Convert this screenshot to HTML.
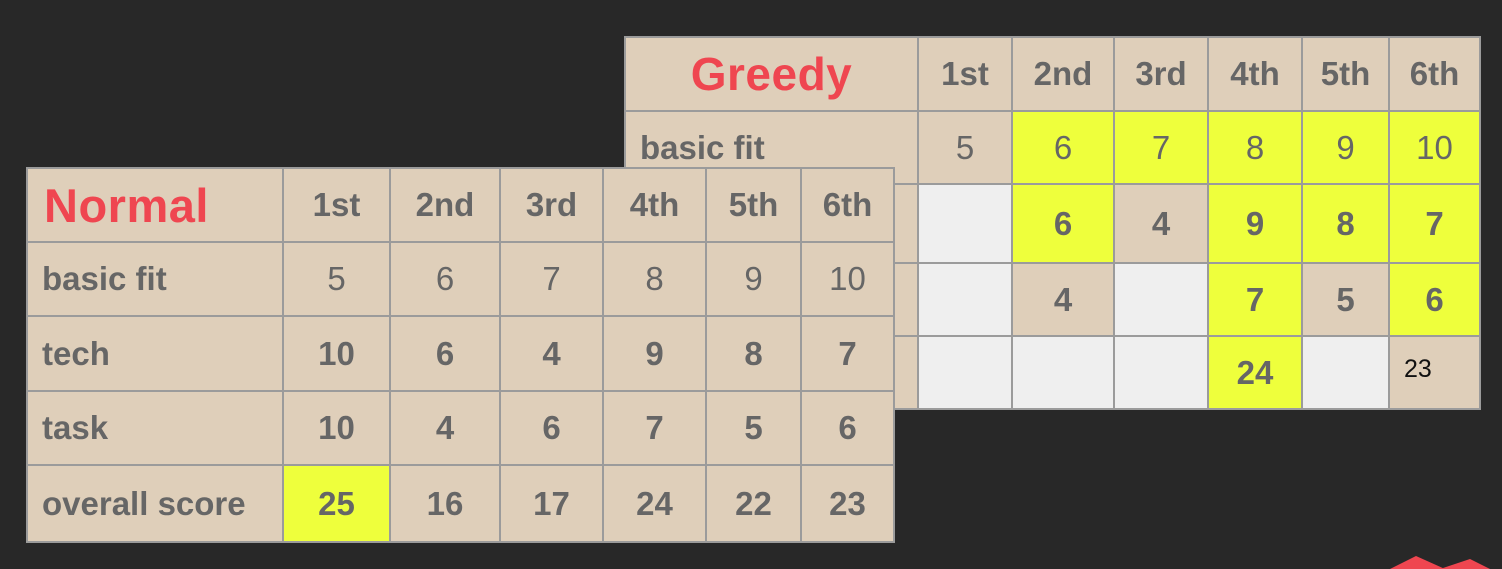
<!DOCTYPE html>
<html><head><style>
html,body{margin:0;padding:0;background:#282828;width:1502px;height:569px;overflow:hidden;font-family:"Liberation Sans",Arial,sans-serif}
table{position:absolute;border-collapse:collapse;table-layout:fixed}
td{border:2px solid #9b9b9b;background:#dfcfba;color:#666;font-size:33px;text-align:center;padding:0;font-weight:bold}
td.l{text-align:left;padding-left:14px}
td.n{font-weight:normal}
td.y{background:#eeff3c}
td.g{background:#efefef}
.t{color:#ef4650;font-size:47px;font-weight:900;text-align:left;padding-left:16px;letter-spacing:0.5px}
</style></head><body>
<table style="left:624px;top:36px;width:856px">
<colgroup><col style="width:293px"><col style="width:94px"><col style="width:102px"><col style="width:94px"><col style="width:94px"><col style="width:87px"><col style="width:91px"></colgroup>
<tr style="height:74px"><td class="t" style="text-align:center;padding-left:0;font-size:46px">Greedy</td><td>1st</td><td>2nd</td><td>3rd</td><td>4th</td><td>5th</td><td>6th</td></tr>
<tr style="height:73px"><td class="l">basic fit</td><td class="n">5</td><td class="n y">6</td><td class="n y">7</td><td class="n y">8</td><td class="n y">9</td><td class="n y">10</td></tr>
<tr style="height:79px"><td class="l">tech</td><td class="g"></td><td class="y">6</td><td>4</td><td class="y">9</td><td class="y">8</td><td class="y">7</td></tr>
<tr style="height:73px"><td class="l">task</td><td class="g"></td><td>4</td><td class="g"></td><td class="y">7</td><td>5</td><td class="y">6</td></tr>
<tr style="height:73px"><td class="l">overall score</td><td class="g"></td><td class="g"></td><td class="g"></td><td class="y">24</td><td class="g"></td><td class="n" style="color:#111;font-size:25px;text-align:left;padding-left:14px;vertical-align:top;padding-top:18px">23</td></tr>
</table>
<table style="left:26px;top:167px;width:867px">
<colgroup><col style="width:256px"><col style="width:107px"><col style="width:110px"><col style="width:103px"><col style="width:103px"><col style="width:95px"><col style="width:93px"></colgroup>
<tr style="height:74px"><td class="t" style="vertical-align:top;padding-top:9px">Normal</td><td>1st</td><td>2nd</td><td>3rd</td><td>4th</td><td>5th</td><td>6th</td></tr>
<tr style="height:74px"><td class="l">basic fit</td><td class="n">5</td><td class="n">6</td><td class="n">7</td><td class="n">8</td><td class="n">9</td><td class="n">10</td></tr>
<tr style="height:75px"><td class="l">tech</td><td>10</td><td>6</td><td>4</td><td>9</td><td>8</td><td>7</td></tr>
<tr style="height:74px"><td class="l">task</td><td>10</td><td>4</td><td>6</td><td>7</td><td>5</td><td>6</td></tr>
<tr style="height:77px"><td class="l">overall score</td><td class="y">25</td><td>16</td><td>17</td><td>24</td><td>22</td><td>23</td></tr>
</table>
<svg style="position:absolute;left:1370px;top:550px" width="132" height="19"><polygon points="20,19 46,6 75,19" fill="#ef4650"/><polygon points="70,19 100,9 120,19" fill="#ef4650"/></svg>
</body></html>
